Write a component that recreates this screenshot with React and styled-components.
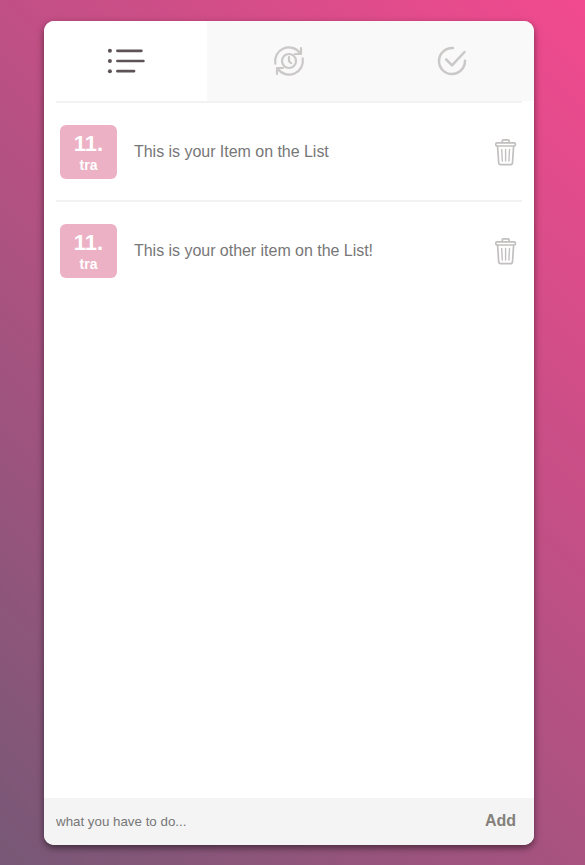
import React from "react";
import styled, { createGlobalStyle } from "styled-components";

const GlobalStyle = createGlobalStyle`
  * { box-sizing: border-box; }
  body { margin: 0; font-family: "Liberation Sans", Arial, sans-serif; }
`;

const Page = styled.main`
  height: 865px;
  padding: 21.4px 51px 20px 44px;
  background: linear-gradient(45deg, #775876, #f24a8f);
`;

const Card = styled.section`
  display: flex;
  flex-direction: column;
  height: 100%;
  overflow: hidden;
  border-radius: 10px;
  background: #fff;
  box-shadow: 0 3px 7px rgba(0, 0, 0, 0.5);
`;

const Tabs = styled.nav`
  display: grid;
  grid-template-columns: repeat(3, 1fr);
  height: 80px;
  flex: none;
`;

const Tab = styled.button`
  display: flex;
  align-items: center;
  justify-content: center;
  padding: 0;
  border: 0;
  background: ${(p) => (p.$active ? "#fff" : "#f9f9f9")};
  color: ${(p) => (p.$active ? "#5d5354" : "#cbc8c8")};
`;

const List = styled.ul`
  flex: 1;
  margin: 0;
  padding: 0 12px;
  list-style: none;
`;

const Item = styled.li`
  display: flex;
  align-items: center;
  height: 99px;
  padding: 0 4px;
  border-top: 2px solid #f2f2f2;
`;

const DateBadge = styled.div`
  display: flex;
  flex-direction: column;
  align-items: center;
  width: 57px;
  height: 54px;
  padding-top: 6px;
  border-radius: 6px;
  background: #ecb1c4;
  color: #fff;
  font-weight: bold;
`;

const Day = styled.span`
  font-size: 22px;
  line-height: 25px;
`;

const Month = styled.span`
  font-size: 14px;
  line-height: 18px;
`;

const Label = styled.span`
  flex: 1;
  margin-left: 17px;
  padding-top: 1px;
  color: #777;
  font-size: 16px;
  letter-spacing: -0.03px;
`;

const DeleteButton = styled.button`
  display: flex;
  width: 24px;
  height: 28px;
  padding: 0;
  border: 0;
  background: none;
  color: #c2bfbf;
`;

const Footer = styled.form`
  display: flex;
  align-items: center;
  justify-content: space-between;
  height: 47px;
  flex: none;
  padding: 0 18px 0 12px;
  background: #f4f4f4;
`;

const TaskInput = styled.input`
  width: 350px;
  padding: 0 0 1px;
  border: 0;
  outline: 0;
  background: transparent;
  font: 13.333px "Liberation Sans", Arial, sans-serif;
  &::placeholder { color: #777; opacity: 1; }
`;

const AddButton = styled.button`
  padding: 0 0 2px;
  border: 0;
  background: none;
  color: #83807b;
  font: bold 16px "Liberation Sans", Arial, sans-serif;
`;

const ListIcon = () => (
  <svg width="38" height="28" viewBox="0 0 38 28" fill="none" stroke="currentColor" strokeWidth="2.7" strokeLinecap="round">
    <path d="M10.4 3.8h24M10.4 14h26M10.4 24.2h16.6" />
    <g fill="currentColor" stroke="none">
      <circle cx="2.9" cy="3.8" r="2" />
      <circle cx="2.9" cy="14" r="2" />
      <circle cx="2.9" cy="24.2" r="2" />
    </g>
  </svg>
);

const ProgressIcon = () => (
  <svg width="32" height="32" viewBox="0 0 32 32" fill="none" stroke="currentColor" strokeWidth="2.2" strokeLinecap="round" strokeLinejoin="round">
    <path d="M2.3 18.6A13.8 13.8 0 0 1 27 8M28 3v6h-6M29.7 13.4A13.8 13.8 0 0 1 5 24M4 29v-6h6" />
    <circle cx="16" cy="16" r="7" />
    <path d="M16 12v4.2l2.2 2" />
  </svg>
);

const DoneIcon = () => (
  <svg width="30" height="30" viewBox="0 0 30 30" fill="none" stroke="currentColor" strokeWidth="2.5" strokeLinecap="round" strokeLinejoin="round">
    <path d="M16 2.1A13 13 0 1 0 28 14.8M9.2 13.5l5.8 5.8L27.5 6" />
  </svg>
);

const TrashIcon = () => (
  <svg width="24" height="28" viewBox="0 0 24 28" fill="none" stroke="currentColor" strokeWidth="1.7" strokeLinecap="round" strokeLinejoin="round">
    <rect x="1.8" y="4.8" width="19.6" height="3.2" rx="1.2" />
    <path d="M8.3 4.5V2.8q0-1 1-1h4.8q1 0 1 1v1.7M3.6 8.4l1.1 16.2q.1 2 2 2h9.8q1.900 0 2-2L19.600 8.400" />
    <path strokeWidth="1.4" d="M7.700 11.500l.6 11.500M11.600 11.500v11.500M15.500 11.500l-.6 11.500" />
  </svg>
);

const items = ["This is your Item on the List", "This is your other item on the List!"];

export default function App() {
  return (
    <>
      <GlobalStyle />
      <Page>
        <Card>
          <Tabs>
            <Tab $active aria-label="List"><ListIcon /></Tab>
            <Tab aria-label="In progress"><ProgressIcon /></Tab>
            <Tab aria-label="Done"><DoneIcon /></Tab>
          </Tabs>
          <List>
            {items.map((text) => (
              <Item key={text}>
                <DateBadge>
                  <Day>11.</Day>
                  <Month>tra</Month>
                </DateBadge>
                <Label>{text}</Label>
                <DeleteButton aria-label="Delete"><TrashIcon /></DeleteButton>
              </Item>
            ))}
          </List>
          <Footer>
            <TaskInput placeholder="what you have to do..." />
            <AddButton type="button">Add</AddButton>
          </Footer>
        </Card>
      </Page>
    </>
  );
}
